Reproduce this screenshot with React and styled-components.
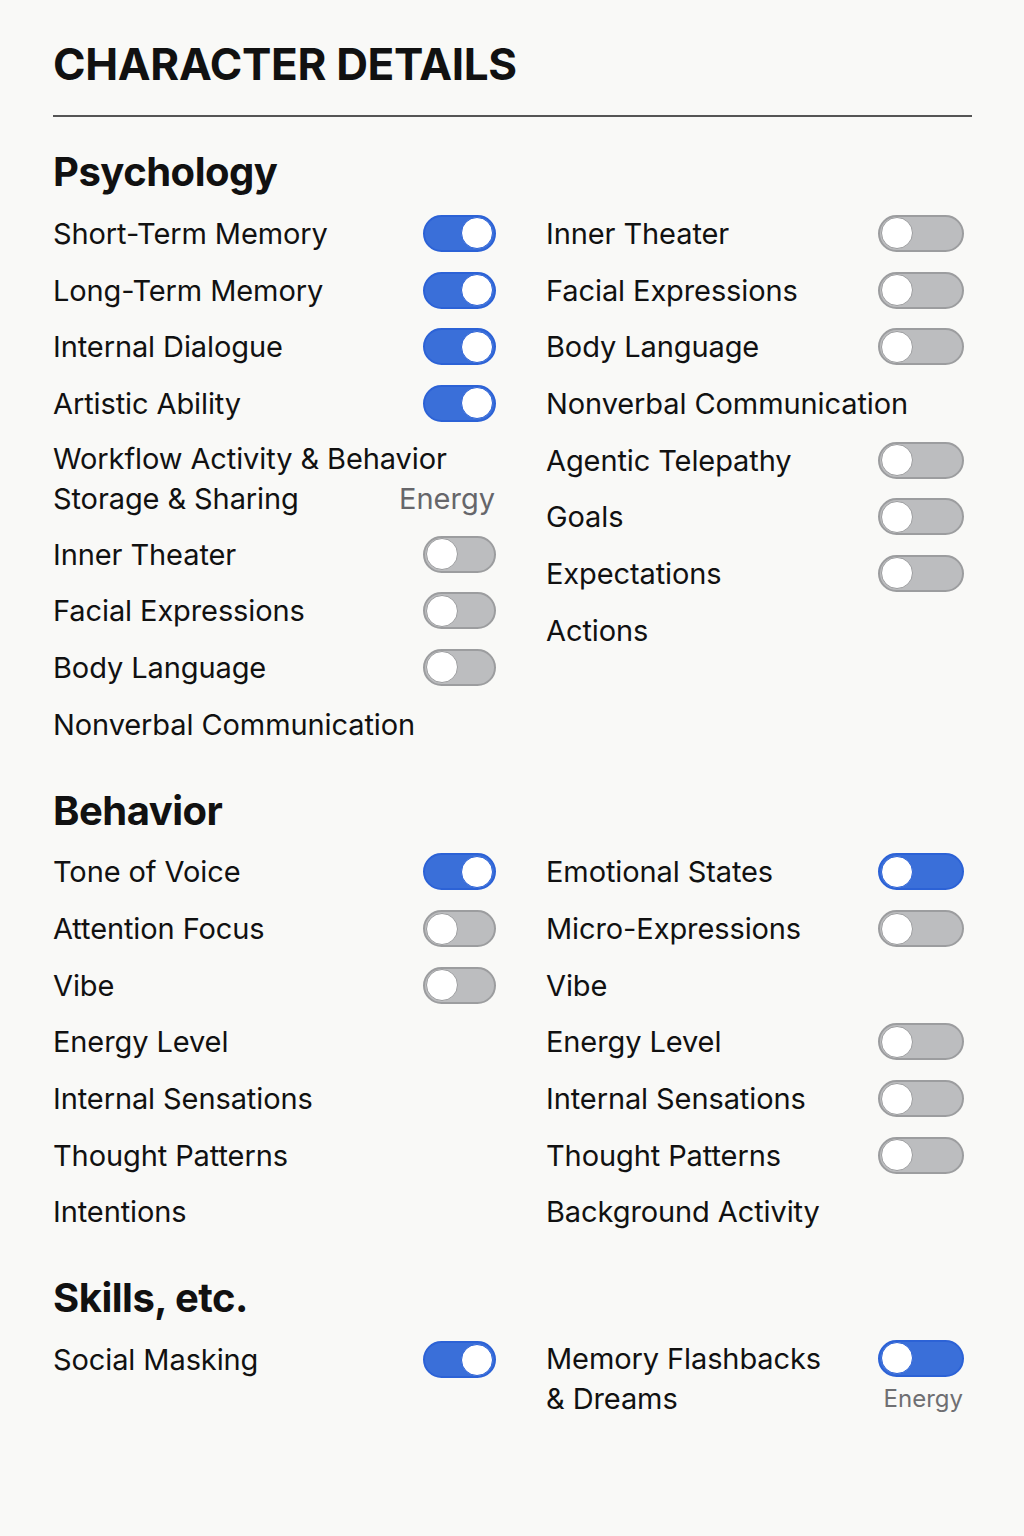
import React from 'react'
import styled, { createGlobalStyle } from 'styled-components'

const GlobalStyle = createGlobalStyle`
  html, body {
    margin: 0;
    padding: 0;
    background: #f9f9f7;
  }
  body {
    font-family: Inter, "Noto Sans", "Liberation Sans", sans-serif;
    color: #111;
  }
`

const psychologyLeft = [
  { label: 'Short-Term Memory', toggle: 'on' },
  { label: 'Long-Term Memory', toggle: 'on' },
  { label: 'Internal Dialogue', toggle: 'on' },
  { label: 'Artistic Ability', toggle: 'on' },
  { lines: ['Workflow Activity & Behavior', 'Storage & Sharing'], note: 'Energy' },
  { label: 'Inner Theater', toggle: 'off' },
  { label: 'Facial Expressions', toggle: 'off' },
  { label: 'Body Language', toggle: 'off' },
  { label: 'Nonverbal Communication' },
]

const psychologyRight = [
  { label: 'Inner Theater', toggle: 'off' },
  { label: 'Facial Expressions', toggle: 'off' },
  { label: 'Body Language', toggle: 'off' },
  { label: 'Nonverbal Communication' },
  { label: 'Agentic Telepathy', toggle: 'off' },
  { label: 'Goals', toggle: 'off' },
  { label: 'Expectations', toggle: 'off' },
  { label: 'Actions' },
]

const behaviorLeft = [
  { label: 'Tone of Voice', toggle: 'on' },
  { label: 'Attention Focus', toggle: 'off' },
  { label: 'Vibe', toggle: 'off' },
  { label: 'Energy Level' },
  { label: 'Internal Sensations' },
  { label: 'Thought Patterns' },
  { label: 'Intentions' },
]

const behaviorRight = [
  { label: 'Emotional States', toggle: 'blue-left' },
  { label: 'Micro-Expressions', toggle: 'off' },
  { label: 'Vibe' },
  { label: 'Energy Level', toggle: 'off' },
  { label: 'Internal Sensations', toggle: 'off' },
  { label: 'Thought Patterns', toggle: 'off' },
  { label: 'Background Activity' },
]

const skillsLeft = [{ label: 'Social Masking', toggle: 'on' }]

const skillsRight = [
  { lines: ['Memory Flashbacks', '& Dreams'], toggle: 'blue-left', note: 'Energy', small: true },
]

function Toggle({ state, wide }) {
  const blue = state !== 'off'
  const knobRight = state === 'on'
  return (
    <Track $blue={blue} $wide={wide}>
      <Knob $blue={blue} $right={knobRight} />
    </Track>
  )
}

function Item({ item, wide }) {
  if (item.lines) {
    return (
      <MultiRow>
        <Label>{item.lines[0]}</Label>
        <Side>{item.toggle && <Toggle state={item.toggle} wide={wide} />}</Side>
        <Label>{item.lines[1]}</Label>
        <Side>
          <Note $small={item.small}>{item.note}</Note>
        </Side>
      </MultiRow>
    )
  }
  return (
    <Row>
      <Label>{item.label}</Label>
      {item.toggle && <Toggle state={item.toggle} wide={wide} />}
    </Row>
  )
}

function Section({ title, left, right }) {
  return (
    <SectionBlock>
      <SectionTitle>{title}</SectionTitle>
      <Columns>
        <Column>
          {left.map((item, i) => (
            <Item key={i} item={item} />
          ))}
        </Column>
        <Column>
          {right.map((item, i) => (
            <Item key={i} item={item} wide />
          ))}
        </Column>
      </Columns>
    </SectionBlock>
  )
}

export default function App() {
  return (
    <Page>
      <GlobalStyle />
      <Title>CHARACTER DETAILS</Title>
      <Rule />
      <Section title="Psychology" left={psychologyLeft} right={psychologyRight} />
      <Section title="Behavior" left={behaviorLeft} right={behaviorRight} />
      <Section title="Skills, etc." left={skillsLeft} right={skillsRight} />
    </Page>
  )
}

const Page = styled.div`
  width: 1024px;
  min-height: 1536px;
  box-sizing: border-box;
  padding: 36px 52px 0 53px;
`

const Title = styled.h1`
  margin: 0;
  font-size: 44px;
  line-height: 56px;
  font-weight: 700;
  letter-spacing: -0.3px;
`

const Rule = styled.div`
  margin-top: 23px;
  height: 2px;
  background: #555;
`

const SectionBlock = styled.section`
  margin-top: 31px;
  & + & {
    margin-top: 34px;
  }
`

const SectionTitle = styled.h2`
  margin: 0 0 9px;
  font-size: 40px;
  line-height: 48px;
  font-weight: 700;
  letter-spacing: -0.5px;
`

const Columns = styled.div`
  display: grid;
  grid-template-columns: 443px 418px;
  column-gap: 50px;
  align-items: start;
`

const Column = styled.div`
  display: flex;
  flex-direction: column;
`

const Row = styled.div`
  display: flex;
  align-items: center;
  justify-content: space-between;
  height: 56.7px;
`

const MultiRow = styled.div`
  display: grid;
  grid-template-columns: minmax(0, 1fr) auto;
  grid-auto-rows: 40px;
  align-items: center;
  padding: 7px 0 7px;
`

const Label = styled.span`
  font-size: 29px;
  font-weight: 400;
  white-space: nowrap;
  letter-spacing: -0.1px;
`

const Side = styled.div`
  display: flex;
  justify-content: flex-end;
  align-items: center;
`

const Note = styled.span`
  font-size: ${(p) => (p.$small ? '24px' : '29px')};
  color: ${(p) => (p.$small ? '#6f6f72' : '#66666a')};
  padding-right: 1px;
`

const Track = styled.div`
  position: relative;
  box-sizing: border-box;
  width: ${(p) => (p.$wide ? '86px' : '73px')};
  height: 37px;
  border-radius: 19px;
  flex-shrink: 0;
  background: ${(p) => (p.$blue ? '#3a6fd9' : '#bcbdbf')};
  border: 2px solid ${(p) => (p.$blue ? '#2c62d6' : '#9c9d9f')};
`

const Knob = styled.div`
  position: absolute;
  top: 0.5px;
  ${(p) => (p.$right ? 'right: 1px;' : 'left: 1px;')}
  box-sizing: border-box;
  width: 32px;
  height: 32px;
  border-radius: 50%;
  background: #fff;
  border: 1px solid ${(p) => (p.$blue ? '#2c62d6' : '#9c9d9f')};
`
